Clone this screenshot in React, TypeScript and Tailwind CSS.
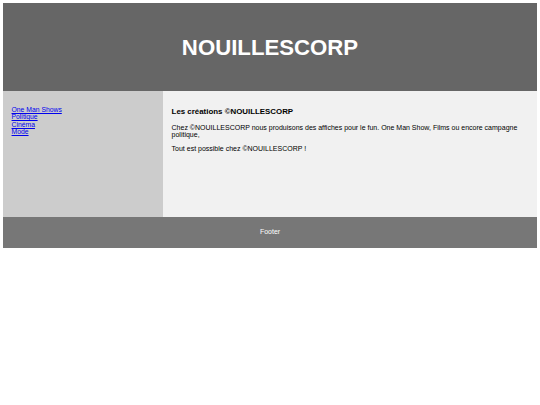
const NAV_LINKS = ["One Man Shows", "Politique", "Cinéma", "Mode"];

export default function App() {
  return (
    <div className="m-[3.3px] font-['Liberation_Sans',Arial,sans-serif] text-[6.6px] leading-[1.15] text-black">
      <header className="bg-[#666] px-[12.4px] py-[31.25px] text-center text-white">
        <h2 className="text-[22.2px] font-bold leading-[25px]">NOUILLESCORP</h2>
      </header>

      <section className="flex h-[126px]">
        <nav className="w-[30%] shrink-0 bg-[#ccc] p-[8.25px]">
          <ul className="my-[6.6px] list-none p-0 text-[6.8px] leading-[7.5px]">
            {NAV_LINKS.map((label) => (
              <li key={label}>
                <a href="#" className="text-[#0000EE] underline decoration-[#0000EE]">
                  {label}
                </a>
              </li>
            ))}
          </ul>
        </nav>

        <article className="flex-1 bg-[#f1f1f1] p-[8.25px]">
          <h3 className="mt-[7.7px] mb-[7.7px] text-[7.9px] font-bold leading-[1.15]">
            Les créations ©NOUILLESCORP
          </h3>
          <p className="mb-[6.6px] text-[7px] leading-[7.6px]">
            Chez ©NOUILLESCORP nous produisons des affiches pour le fun. One Man Show, Films ou encore campagne politique,
          </p>
          <p className="text-[7px] leading-[7.6px]">Tout est possible chez ©NOUILLESCORP !</p>
        </article>
      </section>

      <footer className="bg-[#777] px-[4.1px] py-[5px] text-center text-white">
        <p className="my-[6.6px] text-[7px] leading-[8px]">Footer</p>
      </footer>
    </div>
  );
}
